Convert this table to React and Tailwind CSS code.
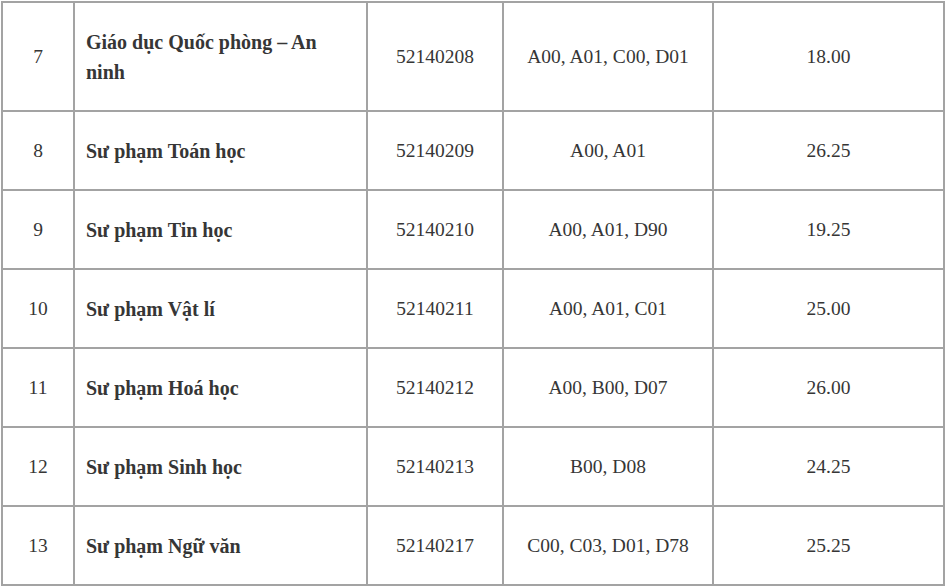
import React from "react";

const rows = [
  ["7", "Giáo dục Quốc phòng – An ninh", "52140208", "A00, A01, C00, D01", "18.00"],
  ["8", "Sư phạm Toán học", "52140209", "A00, A01", "26.25"],
  ["9", "Sư phạm Tin học", "52140210", "A00, A01, D90", "19.25"],
  ["10", "Sư phạm Vật lí", "52140211", "A00, A01, C01", "25.00"],
  ["11", "Sư phạm Hoá học", "52140212", "A00, B00, D07", "26.00"],
  ["12", "Sư phạm Sinh học", "52140213", "B00, D08", "24.25"],
  ["13", "Sư phạm Ngữ văn", "52140217", "C00, C03, D01, D78", "25.25"],
];

export default function App() {
  return (
    <div
      className="bg-white w-[946px] h-[587px] overflow-hidden pl-[1px] pt-[1px] text-[#363636] text-[19.5px] leading-[30px]"
      style={{ fontFamily: '"Liberation Serif", "Times New Roman", serif' }}
    >
      <div className="grid grid-cols-[72px_293px_136px_210px_231px] w-[944px] border-l-2 border-t-2 border-[#a3a3a3]">
        {rows.map((r) => (
          <React.Fragment key={r[0]}>
            <div className="border-r-2 border-b-2 border-[#a3a3a3] pt-[24px] pb-[23px] flex items-center justify-center text-center">
              {r[0]}
            </div>
            <div className="border-r-2 border-b-2 border-[#a3a3a3] pt-[24px] pb-[23px] pl-[11px] pr-[24px] font-bold text-[20px] flex items-center">
              <span>{r[1]}</span>
            </div>
            <div className="border-r-2 border-b-2 border-[#a3a3a3] pt-[24px] pb-[23px] flex items-center justify-center text-center">
              {r[2]}
            </div>
            <div className="border-r-2 border-b-2 border-[#a3a3a3] pt-[24px] pb-[23px] flex items-center justify-center text-center">
              {r[3]}
            </div>
            <div className="border-r-2 border-b-2 border-[#a3a3a3] pt-[24px] pb-[23px] flex items-center justify-center text-center">
              {r[4]}
            </div>
          </React.Fragment>
        ))}
      </div>
    </div>
  );
}
